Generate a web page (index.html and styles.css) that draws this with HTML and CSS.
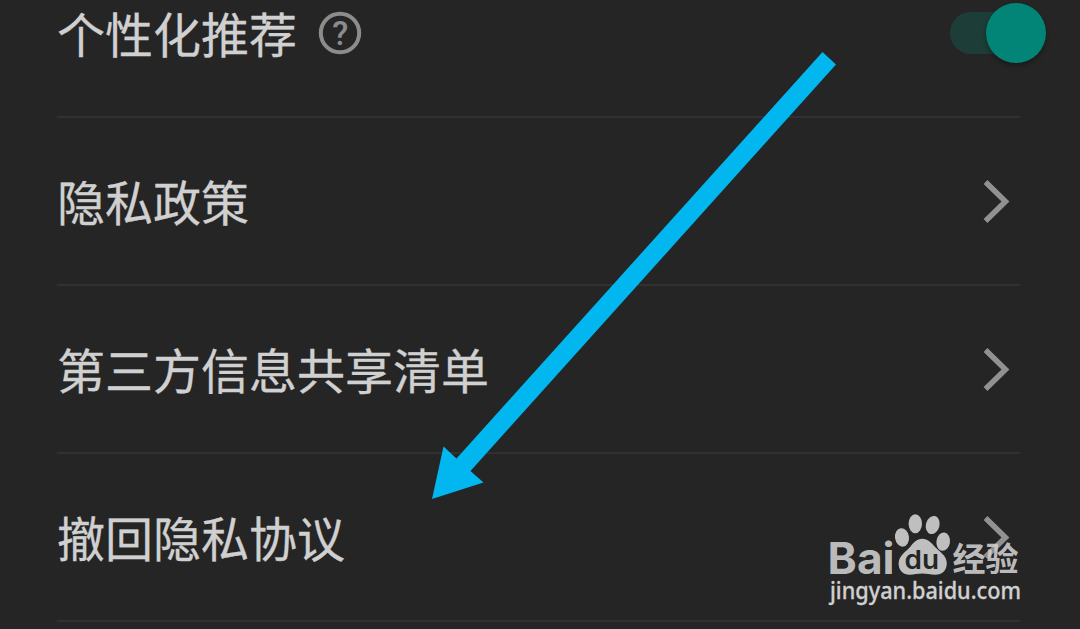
FILE: index.html
```html
<!DOCTYPE html>
<html lang="zh-CN">
<head>
  <meta charset="UTF-8">
  <title>隐私设置</title>
  <link rel="stylesheet" href="styles.css">
</head>
<body>
  <main class="settings">
    <div class="row row-first">
      <span class="label">个性化推荐</span>
      <svg class="help" viewBox="0 0 44 44">
        <circle cx="22" cy="22" r="19.2"/>
        <text x="22.2" y="34" text-anchor="middle">?</text>
      </svg>
      <div class="switch"><div class="knob"></div></div>
    </div>
    <div class="row">
      <span class="label">隐私政策</span>
      <svg class="chevron" viewBox="0 0 28 44"><path d="M3.5 3 23.5 22.5 3.5 42"/></svg>
    </div>
    <div class="row">
      <span class="label">第三方信息共享清单</span>
      <svg class="chevron" viewBox="0 0 28 44"><path d="M3.5 3 23.5 22.5 3.5 42"/></svg>
    </div>
    <div class="row">
      <span class="label">撤回隐私协议</span>
      <svg class="chevron" viewBox="0 0 28 44"><path d="M3.5 3 23.5 22.5 3.5 42"/></svg>
    </div>
  </main>

  <svg class="arrow" viewBox="0 0 1080 629">
    <polygon points="822.5,52 836,64.5 470.5,471 483.5,482.5 432,499 443.5,446.5 456.5,458.5"/>
  </svg>

  <svg class="watermark" viewBox="820 505 210 110">
    <text class="wm-bai" x="827.6" y="573.7" textLength="67" lengthAdjust="spacingAndGlyphs">Bai</text>
    <ellipse cx="915.3" cy="523.8" rx="6.7" ry="9.5"/>
    <ellipse cx="932.7" cy="525" rx="6.8" ry="9.2" transform="rotate(15 932.7 525)"/>
    <ellipse cx="902" cy="537.4" rx="7" ry="9.3" transform="rotate(-8 902 537.4)"/>
    <ellipse cx="943.2" cy="541.7" rx="6.8" ry="9.2" transform="rotate(8 943.2 541.7)"/>
    <path d="M922.3 538.8c-5.5 0-9 4-12 8-4 5-11.7 8.500-11.7 17 0 6.500 4.500 11 11 11 4.500 0 8-1.200 12.700-1.200s8 1.200 13 1.200c7 0 11.500-4.500 11.500-11.500 0-8-7.500-11.500-12-16.500-3.500-4-7-8-12.500-8z"/>
    <text class="wm-du" x="904.5" y="568.5" textLength="34.5" lengthAdjust="spacingAndGlyphs">du</text>
    <text class="wm-cn" x="952.5" y="570.5" textLength="66">经验</text>
    <text class="wm-url" x="830" y="599.2" textLength="191" lengthAdjust="spacingAndGlyphs">jingyan.baidu.com</text>
  </svg>
</body>
</html>
```
FILE: styles.css
```css
body {
  margin: 0;
  height: 629px;
  overflow: hidden;
  background-color: #252525;
  font-family: "Noto Sans CJK SC", sans-serif;
}
.settings {
  padding: 0 60px 0 57px;
}
.row {
  display: flex;
  align-items: center;
  box-sizing: border-box;
  height: 168px;
  border-bottom: 2px solid #313131;
}
.row-first {
  height: 118px;
  padding-bottom: 50px;
}
.label {
  padding-bottom: 2px;
  color: #d0d0d0;
  font-size: 48px;
  line-height: 60px;
  -webkit-text-stroke: 0.3px #d0d0d0;
}
.help {
  width: 44px;
  height: 44px;
  margin-left: 21px;
}
.help circle {
  fill: none;
  stroke: #8c8c8c;
  stroke-width: 4;
}
.help text {
  fill: #8c8c8c;
  font-family: Roboto, sans-serif;
  font-size: 33px;
  font-weight: 500;
}
.chevron {
  width: 28px;
  height: 44px;
  margin-left: auto;
  margin-right: 10px;
}
.chevron path {
  fill: none;
  stroke: #919191;
  stroke-width: 5.5;
}

/* switch */
.switch {
  display: flex;
  align-items: center;
  justify-content: flex-end;
  width: 96px;
  height: 42px;
  margin-left: auto;
  margin-right: -26px;
  border-radius: 21px;
  background: linear-gradient(to right, #1d3d38 75px, transparent 75px);
}
.knob {
  flex: none;
  width: 60px;
  height: 60px;
  border-radius: 50%;
  background-color: #028576;
  box-shadow: 0 3px 5px rgba(0,0,0,0.3);
}

/* arrow and logo lie over the list */
.arrow {
  position: absolute;
  top: 0;
  left: 0;
  width: 1080px;
  height: 629px;
  fill: #02b6ef;
}
.watermark {
  position: absolute;
  left: 820px;
  top: 505px;
  width: 210px;
  height: 110px;
  overflow: visible;
  fill: rgba(208,208,208,0.9);
}
.wm-bai {
  font-family: Inter, "Liberation Sans", sans-serif;
  font-size: 43.5px;
  font-weight: bold;
}
.wm-du {
  fill: #252525;
  font-family: Inter, "Liberation Sans", sans-serif;
  font-size: 26px;
  font-weight: 600;
}
.wm-cn {
  font-size: 33px;
  font-weight: bold;
}
.wm-url {
  fill: #d0d0d0;
  font-family: "Noto Sans", sans-serif;
  font-size: 23.5px;
  font-weight: 500;
  stroke: #d0d0d0;
  stroke-width: 0.3px;
}
```
